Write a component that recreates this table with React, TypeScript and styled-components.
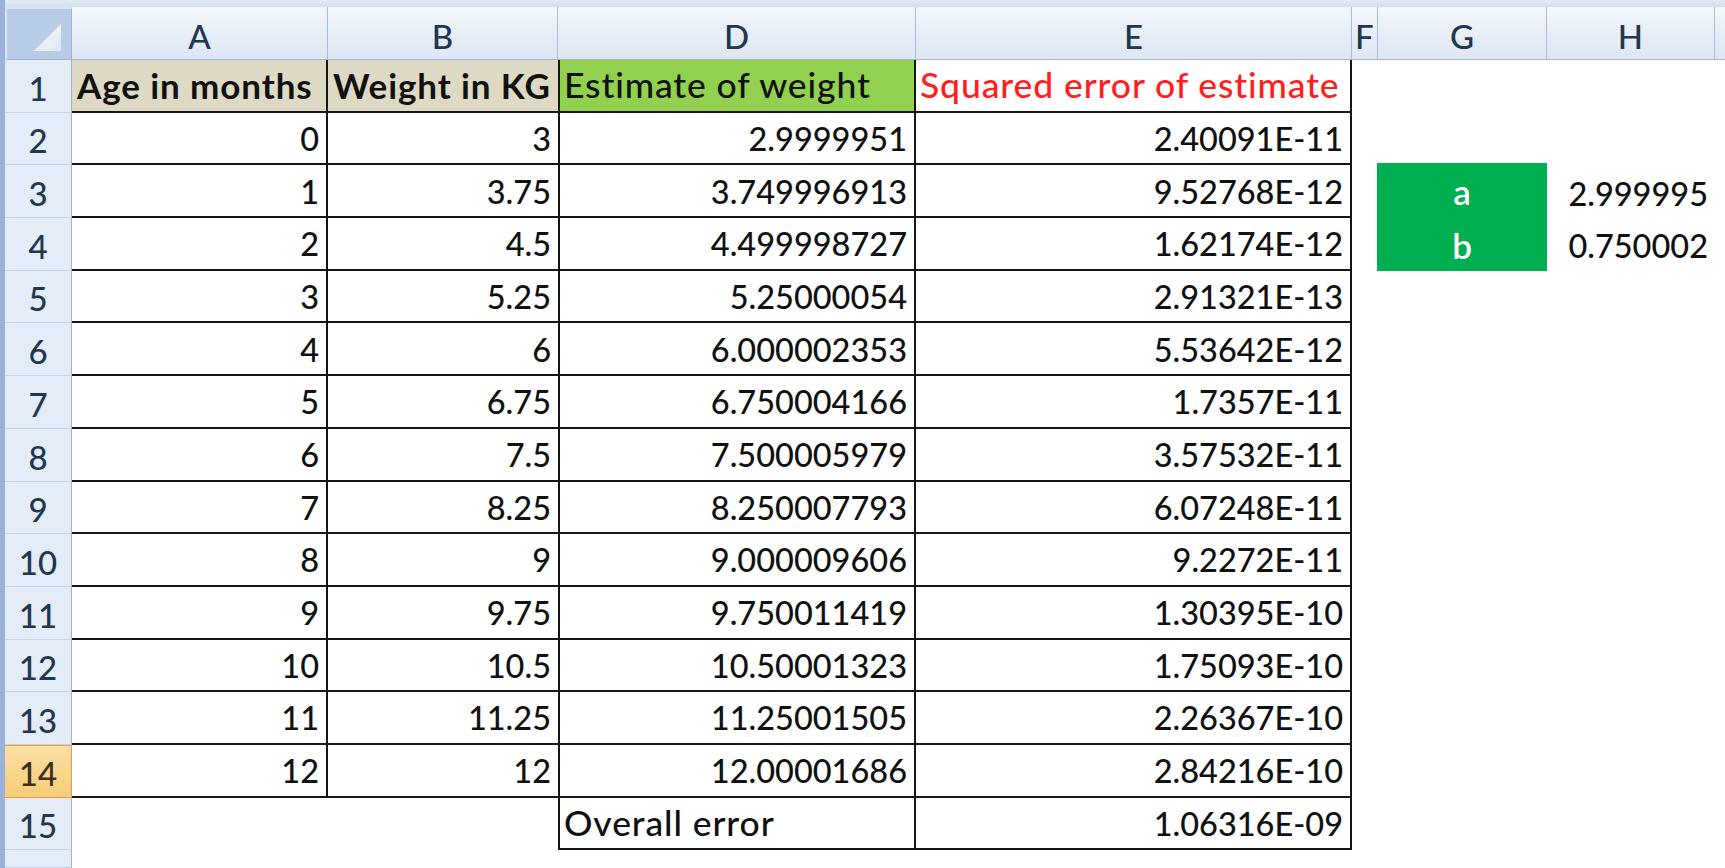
import React from 'react';
import styled, {createGlobalStyle, css} from "styled-components";

const GlobalStyle = createGlobalStyle`
  html, body {
    margin: 0;
    padding: 0;
    background: #ffffff;
    overflow: hidden;
  }
`

const Window = styled.div`
  width: 1725px;
  height: 868px;
  display: flex;
  flex-direction: column;
  background: #ffffff;
  font-family: Lato, "Open Sans", sans-serif;
`
const TopStrip = styled.div`
  height: 7px;
  flex: none;
  background: linear-gradient(#e3ebf6, #d3dff0);
  border-left: 5px solid #98b2da;
`
const Body = styled.div`
  flex: 1;
  display: flex;
  border-left: 5px solid #98b2da;
  overflow: hidden;
`
const Sheet = styled.div`
  flex: 1;
  display: grid;
  grid-template-columns: 67px 256px 230px 358px 436px 26px 169px 168px 1fr;
  grid-template-rows: 53px repeat(15, 52.7px) 1fr;
`
const Corner = styled.div`
  box-sizing: border-box;
  background: #b8cbe7;
  border: 2px solid #dbe5f2;
  border-right: 1px solid #9eb6ce;
  border-bottom: 1px solid #9eb6ce;
  display: flex;
  align-items: flex-end;
  justify-content: flex-end;
  padding: 0 10px 8px 0;
`
const ColHead = styled.div<{ $narrow?: boolean }>`
  box-sizing: border-box;
  background: linear-gradient(#f5f8fc 0%, #e9eff7 45%, #dde6f2 100%);
  border-right: 1px solid #a9bed8;
  border-bottom: 1px solid #9eb6ce;
  color: #22364d;
  font-size: 33px;
  font-weight: 500;
  line-height: 1;
  display: flex;
  align-items: center;
  justify-content: ${p => p.$narrow ? 'flex-start' : 'center'};
  padding: 7px ${p => p.$narrow ? '0 0 3px' : '0 0 0'};
  overflow: hidden;
`
const RowHead = styled.div<{ $active?: boolean }>`
  box-sizing: border-box;
  background: #e4ecf7;
  border-right: 1px solid #9eb6ce;
  border-bottom: 1px solid #c5d3e6;
  color: #22364d;
  font-size: 33px;
  font-weight: 500;
  line-height: 1;
  display: flex;
  align-items: flex-end;
  justify-content: center;
  padding-bottom: 7px;
  ${p => p.$active && css`
    background: linear-gradient(#fbe0a4, #f7cc78);
    border: 1px solid #f09a3a;
    border-left: none;
    color: #3b3020;
  `}
`
const Cell = styled.div<{
    $align?: 'left' | 'right' | 'center';
    $bg?: string;
    $color?: string;
    $bold?: boolean;
    $text?: boolean;
    $r?: boolean;
    $b?: boolean;
    $l?: boolean;
}>`
  box-sizing: border-box;
  background: ${p => p.$bg || 'transparent'};
  color: ${p => p.$color || '#111111'};
  font-weight: 500;
  font-size: 32.5px;
  line-height: 1;
  white-space: nowrap;
  overflow: hidden;
  display: flex;
  align-items: flex-end;
  justify-content: ${p => p.$align === 'left' ? 'flex-start' : p.$align === 'center' ? 'center' : 'flex-end'};
  padding: 0 7px 8px 6px;
  border-right: ${p => p.$r ? '2px solid #161616' : 'none'};
  border-bottom: ${p => p.$b ? '2px solid #161616' : 'none'};
  border-left: ${p => p.$l ? '2px solid #161616' : 'none'};
  ${p => p.$text && css`
    font-size: 35.5px;
    letter-spacing: 0.9px;
    padding-left: 4px;
  `}
  ${p => p.$bold && css`
    font-weight: 700;
    font-size: 35px;
    letter-spacing: 0.9px;
    padding-left: 5px;
  `}
`
const ParamBox = styled.div`
  grid-row: span 2;
  background: #00b050;
  margin: -2px 0 0 -1px;
  display: flex;
  flex-direction: column;
`
const ParamName = styled.div`
  flex: 1;
  color: #ffffff;
  font-size: 35px;
  font-weight: 600;
  line-height: 1;
  display: flex;
  align-items: flex-end;
  justify-content: center;
  padding-bottom: 8px;
`

const rows: [string, string, string, string][] = [
    ['0', '3', '2.9999951', '2.40091E-11'],
    ['1', '3.75', '3.749996913', '9.52768E-12'],
    ['2', '4.5', '4.499998727', '1.62174E-12'],
    ['3', '5.25', '5.25000054', '2.91321E-13'],
    ['4', '6', '6.000002353', '5.53642E-12'],
    ['5', '6.75', '6.750004166', '1.7357E-11'],
    ['6', '7.5', '7.500005979', '3.57532E-11'],
    ['7', '8.25', '8.250007793', '6.07248E-11'],
    ['8', '9', '9.000009606', '9.2272E-11'],
    ['9', '9.75', '9.750011419', '1.30395E-10'],
    ['10', '10.5', '10.50001323', '1.75093E-10'],
    ['11', '11.25', '11.25001505', '2.26367E-10'],
    ['12', '12', '12.00001686', '2.84216E-10'],
]

const params: Record<number, string> = {3: '2.999995', 4: '0.750002'}

const CornerMark = () => (
    <svg width="27" height="27" viewBox="0 0 27 27">
        <defs>
            <linearGradient id="cm" x1="0" y1="0" x2="1" y2="1">
                <stop offset="0" stopColor="#ffffff"/>
                <stop offset="1" stopColor="#dde6f2"/>
            </linearGradient>
        </defs>
        <polygon points="27,0 27,27 0,27" fill="url(#cm)"/>
    </svg>
)

const App: React.FC = () => {
    return (
        <Window>
            <GlobalStyle/>
            <TopStrip/>
            <Body>
                <Sheet>
                    <Corner><CornerMark/></Corner>
                    <ColHead>A</ColHead>
                    <ColHead>B</ColHead>
                    <ColHead>D</ColHead>
                    <ColHead>E</ColHead>
                    <ColHead $narrow>F</ColHead>
                    <ColHead>G</ColHead>
                    <ColHead>H</ColHead>
                    <ColHead/>

                    <RowHead>1</RowHead>
                    <Cell $align="left" $bg="#ddd9c4" $bold $r $b>Age in months</Cell>
                    <Cell $align="left" $bg="#ddd9c4" $bold $b>Weight in KG</Cell>
                    <Cell $align="left" $bg="#92d050" $text $l $r $b>Estimate of weight</Cell>
                    <Cell $align="left" $color="#ff1e1e" $text $r $b>Squared error of estimate</Cell>
                    <Cell/><Cell/><Cell/><Cell/>

                    {rows.map((r, i) => {
                        const n = i + 2
                        return (
                            <React.Fragment key={n}>
                                <RowHead $active={n === 14}>{n}</RowHead>
                                <Cell $r $b>{r[0]}</Cell>
                                <Cell $b>{r[1]}</Cell>
                                <Cell $l $r $b>{r[2]}</Cell>
                                <Cell $r $b>{r[3]}</Cell>
                                <Cell/>
                                {n === 3 && (
                                    <ParamBox>
                                        <ParamName>a</ParamName>
                                        <ParamName>b</ParamName>
                                    </ParamBox>
                                )}
                                {n !== 3 && n !== 4 && <Cell/>}
                                <Cell>{params[n] || ''}</Cell>
                                <Cell/>
                            </React.Fragment>
                        )
                    })}

                    <RowHead>15</RowHead>
                    <Cell/>
                    <Cell/>
                    <Cell $align="left" $text $l $r $b>Overall error</Cell>
                    <Cell $r $b>1.06316E-09</Cell>
                    <Cell/><Cell/><Cell/><Cell/>

                    <RowHead/>
                </Sheet>
            </Body>
        </Window>
    );
};

export default App;
